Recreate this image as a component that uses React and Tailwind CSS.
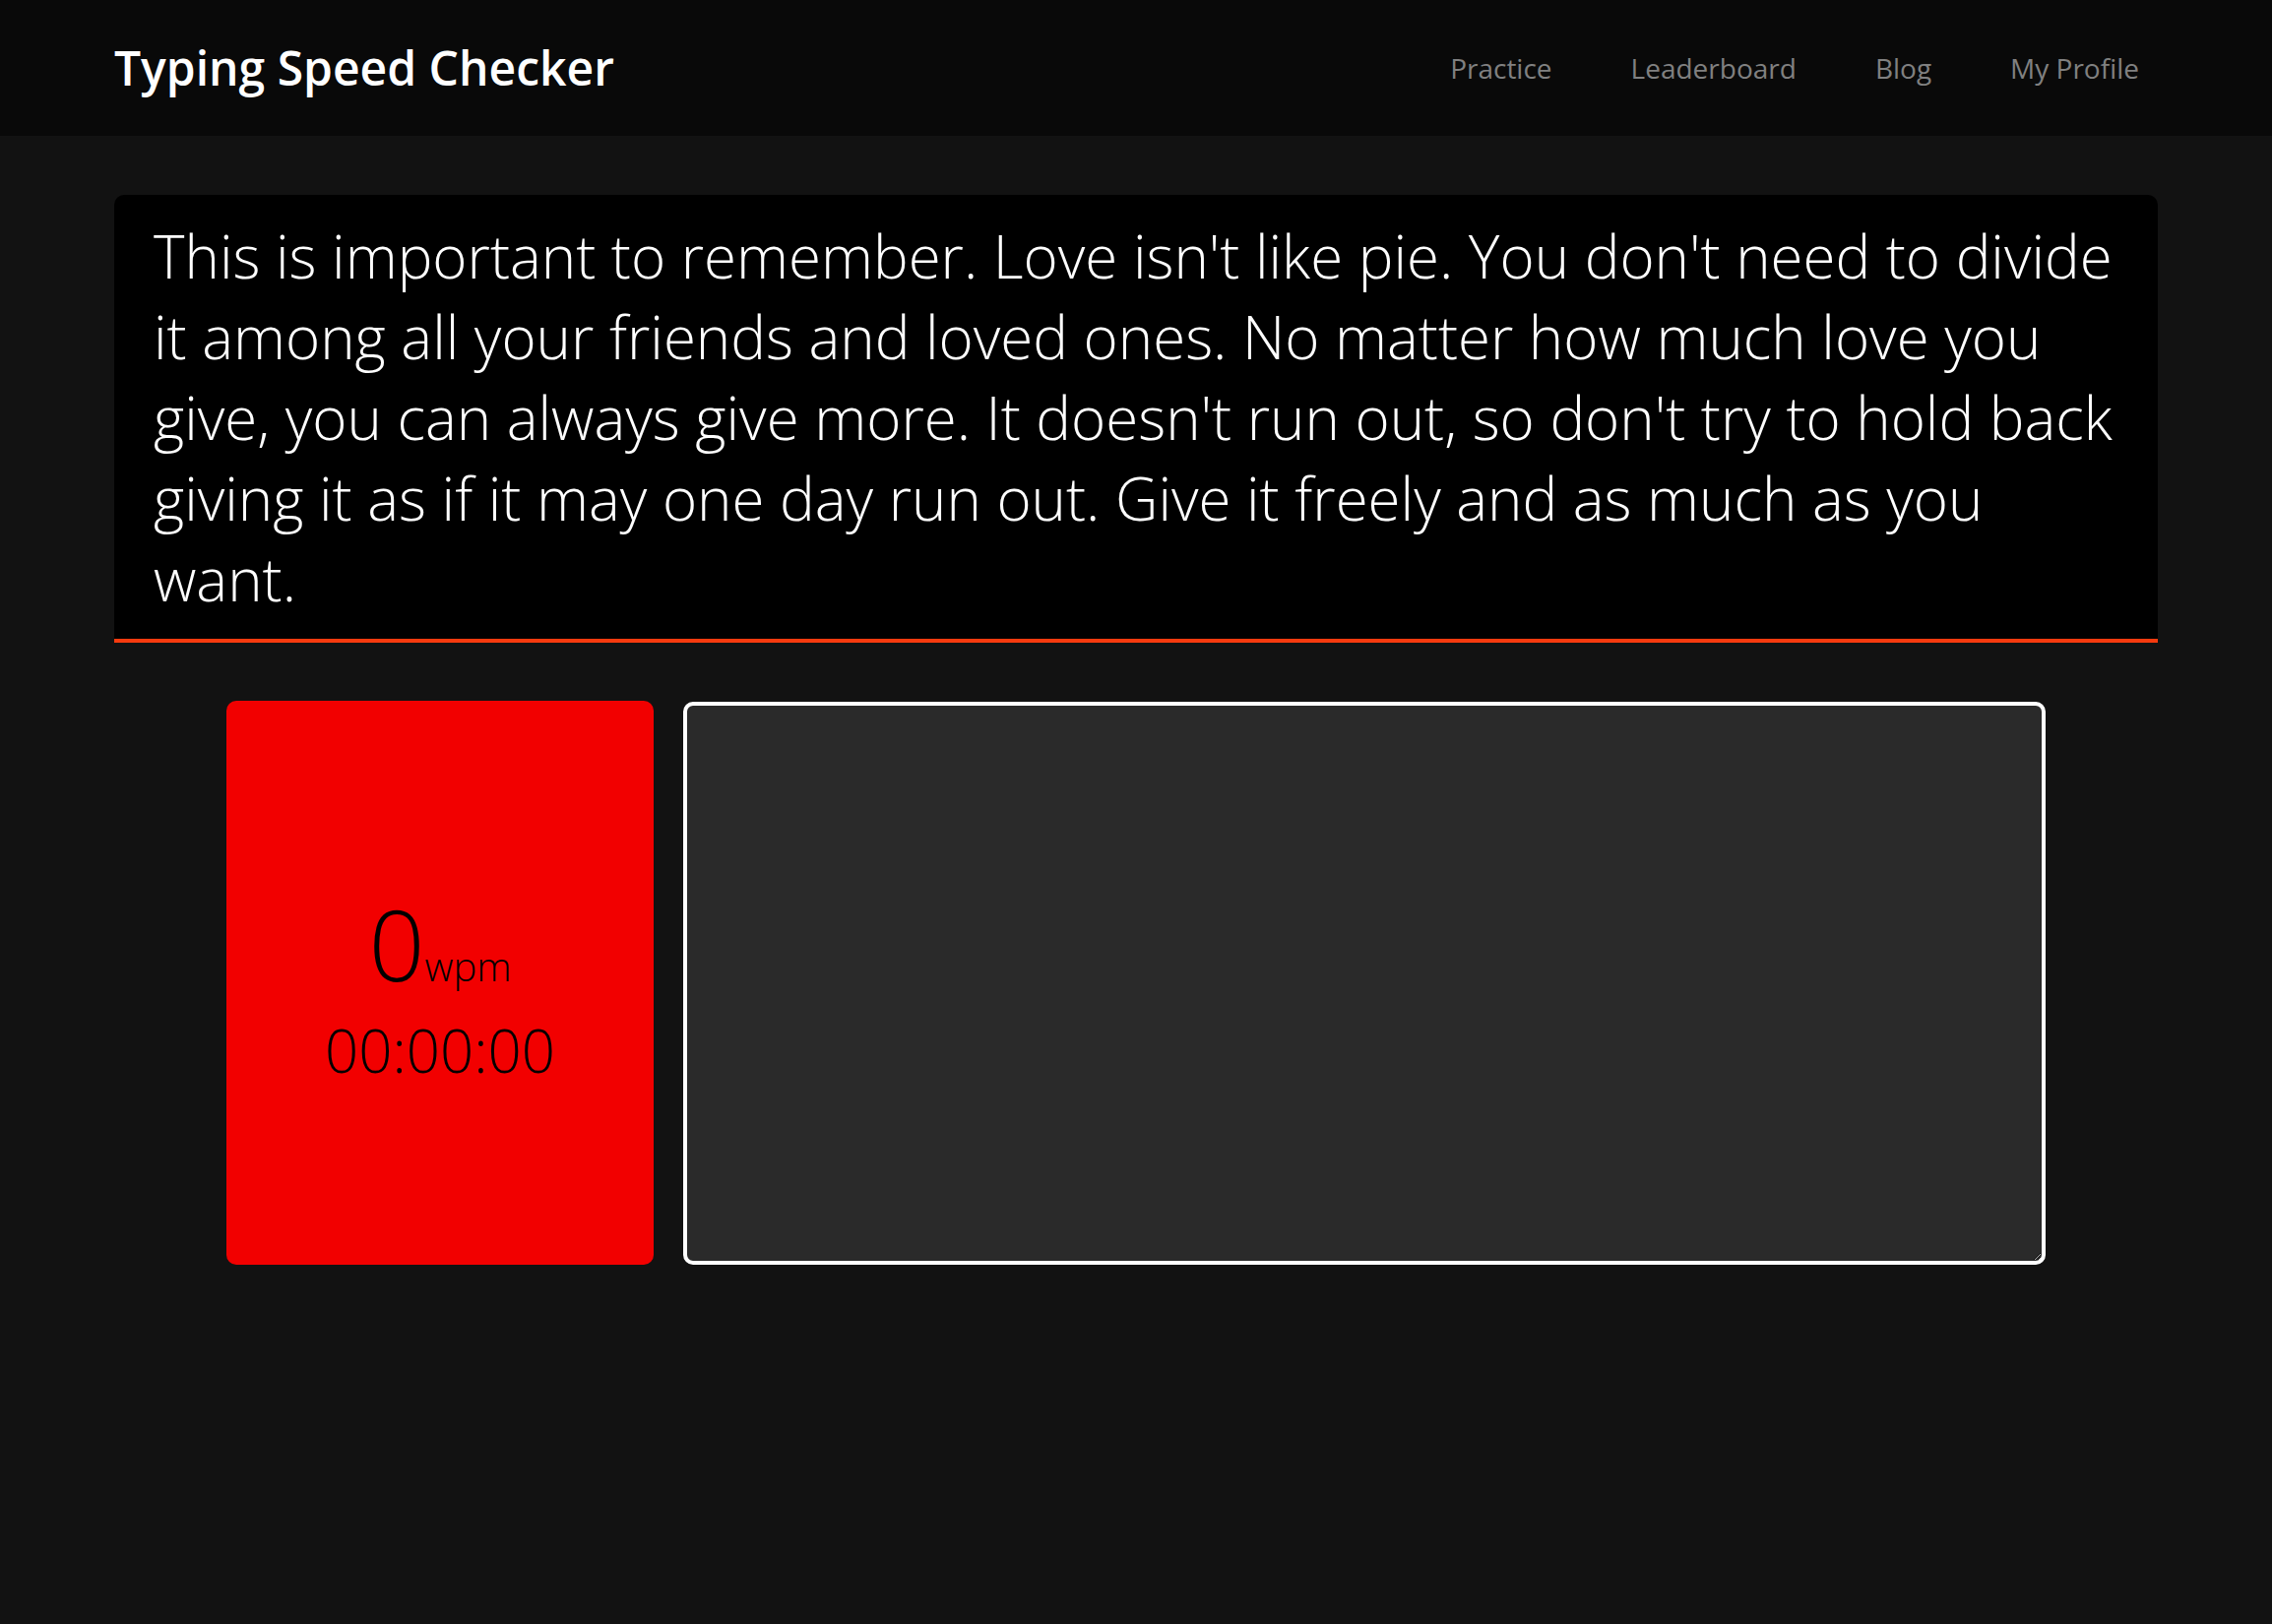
import { useState } from "react";

const QUOTE =
  "This is important to remember. Love isn't like pie. You don't need to divide it among all your friends and loved ones. No matter how much love you give, you can always give more. It doesn't run out, so don't try to hold back giving it as if it may one day run out. Give it freely and as much as you want.";

export default function App() {
  const [typed, setTyped] = useState("");

  return (
    <div
      className="min-h-[1650px] bg-[#121212] text-white"
      style={{ fontFamily: '"Open Sans", "Noto Sans", sans-serif' }}
    >
      {/* Navbar */}
      <nav className="h-[138px] bg-[#090909]">
        <div className="h-full mx-[116px] flex items-center justify-between">
          <a href="#" className="text-[48px] font-semibold leading-none text-white">
            Typing Speed Checker
          </a>
          <ul className="flex items-center gap-[80px] mr-[19px] text-[28px] text-[#808080]">
            <li><a href="#">Practice</a></li>
            <li><a href="#">Leaderboard</a></li>
            <li><a href="#">Blog</a></li>
            <li><a href="#">My Profile</a></li>
          </ul>
        </div>
      </nav>

      <main className="mx-[116px] pt-[60px]">
        {/* Quote */}
        <div className="bg-black rounded-t-[10px] border-b-4 border-[#f63a0e] px-[40px] pt-[21px] pb-[20px]">
          <p className="text-[60px] font-light leading-[82px] text-white">{QUOTE}</p>
        </div>

        {/* Stats + input */}
        <div className="mx-[114px] mt-[59px] flex items-start gap-[30px]">
          <div className="w-[434px] h-[573px] shrink-0 rounded-[10px] bg-[#f20000] flex flex-col items-center justify-center text-black font-light">
            <div className="text-[100px] leading-[136px]">
              0<span className="text-[40px] leading-none">wpm</span>
            </div>
            <div className="text-[60px] leading-[82px]">00:00:00</div>
          </div>
          <textarea
            value={typed}
            onChange={(e) => setTyped(e.target.value)}
            className="flex-1 h-[572px] mt-px rounded-[10px] border-4 border-white bg-[#2a2a2a] text-white text-[40px] p-4 outline-none"
          />
        </div>
      </main>
    </div>
  );
}
